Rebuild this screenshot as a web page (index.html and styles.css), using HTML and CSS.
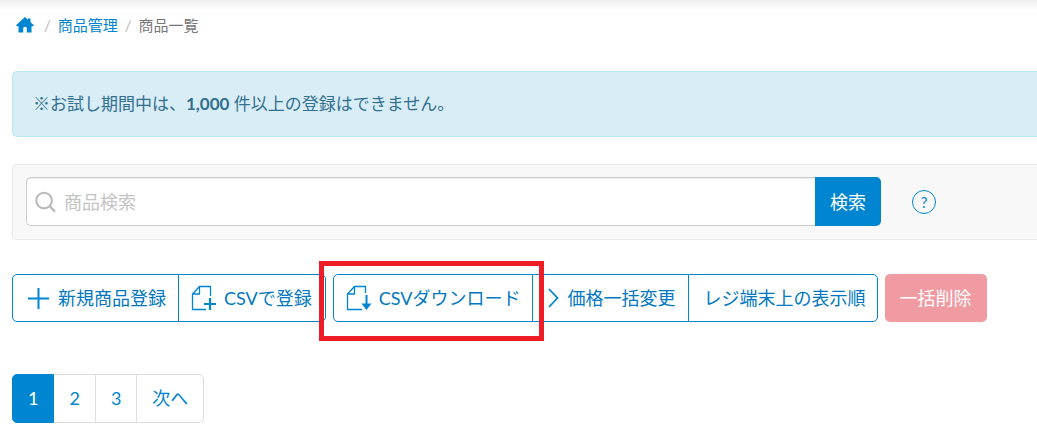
FILE: index.html
```html
<!DOCTYPE html>
<html lang="ja">
<head>
<meta charset="utf-8">
<title>商品一覧</title>
<link rel="stylesheet" href="styles.css">
</head>
<body>
<main class="page">
  <nav class="breadcrumb" aria-label="パンくず">
    <a href="#" class="home" aria-label="ホーム">
      <svg width="18" height="16" viewBox="0 0 18 16"><path fill="currentColor" d="M9 0 12 2.700V1.500h2.500v3.700L18 8.300 16.800 9.300H15.500V15.500H10.800V11.500a1.800 1.800 0 0 0-3.600 0v4H2.500V9.300H1.200L0 8.300Z"/></svg>
    </a>
    <span class="slash">/</span>
    <a href="#">商品管理</a>
    <span class="slash">/</span>
    <span class="current">商品一覧</span>
  </nav>

  <p class="notice">※お試し期間中は、<strong>1,000</strong> 件以上の登録はできません。</p>

  <form class="search">
    <div class="field">
      <svg width="21" height="22" viewBox="0 0 22 22" fill="none" stroke="#bbb" stroke-width="2.200"><circle cx="9.500" cy="9.500" r="8.200"/><path d="m15.300 15.300 5.700 5.700" stroke-width="2.500"/></svg>
      <input class="input" type="text" placeholder="商品検索" aria-label="商品検索">
    </div>
    <button class="submit" type="button">検索</button>
    <button class="help" type="button" aria-label="ヘルプ">?</button>
  </form>

  <div class="toolbar">
    <div class="group">
      <button class="btn btn-wide" type="button">
        <svg width="21" height="21" viewBox="0 0 21 21" fill="none" stroke="currentColor" stroke-width="2"><path d="M10.500 0v21M0 10.500h21"/></svg>
        新規商品登録
      </button>
      <button class="btn" type="button">
        <svg width="26" height="26" viewBox="0 0 26 26" fill="none" stroke="currentColor" stroke-width="1.300"><path d="M19.500 11V1.500H8.500L1.500 9v15.500H15M8.500 1.500V9h-7"/><path stroke-width="2.200" d="M19 13v12M13 19h12"/></svg>
        CSVで登録
      </button>
    </div>
    <div class="group">
      <div class="marked">
        <button class="btn" type="button">
          <svg width="26" height="26" viewBox="0 0 26 26" fill="none" stroke="currentColor" stroke-width="1.300"><path d="M19.500 8V1.500H8.500L1.500 9v15.500H16M8.500 1.500V9h-7"/><path stroke-width="2" d="M20.500 10v10"/><path fill="currentColor" stroke="none" d="M15.500 18.500h10l-5 6.500Z"/></svg>
          CSVダウンロード
        </button>
      </div>
      <button class="btn btn-wide" type="button">
        <svg width="11" height="20" viewBox="0 0 11 20" fill="none" stroke="currentColor" stroke-width="1.800"><path d="m1 1 8.500 9L1 19"/></svg>
        価格一括変更
      </button>
      <button class="btn btn-text" type="button">レジ端末上の表示順</button>
    </div>
    <button class="btn-danger" type="button" disabled>一括削除</button>
  </div>

  <nav class="pager" aria-label="ページ">
    <a href="#" class="active" aria-current="page">1</a>
    <a href="#">2</a>
    <a href="#">3</a>
    <a href="#">次へ</a>
  </nav>
</main>
</body>
</html>
```

FILE: styles.css
```css
* {
  box-sizing: border-box;
}

body {
  margin: 0;
  background: linear-gradient(#f0f0f0, #fff 10px) no-repeat #fff;
  color: #777;
  font: 400 18px/26px Lato, "Noto Sans CJK JP", sans-serif;
}

button,
input {
  font: inherit;
}

a {
  color: #0085d0;
  text-decoration: none;
}

svg {
  display: block;
  flex: none;
}

.page {
  padding: 13px 0 18px 12px;
  overflow: hidden;
}

.breadcrumb {
  display: flex;
  align-items: center;
  gap: 7px;
  padding-left: 4px;
  font-size: 15px;
  line-height: 24px;
}

.home {
  margin-right: 3px;
}

.slash {
  color: #bbb;
}

.notice {
  margin: 34px 0 27px;
  padding: 19px 20px;
  border: 1px solid #bce8f1;
  border-right: 0;
  border-radius: 5px 0 0 5px;
  background: #d9edf7;
  color: #31708f;
  font-size: 17px;
}

.notice strong {
  font-weight: 700;
}

.search {
  display: flex;
  align-items: center;
  padding: 12px 101px 13px 13px;
  border: 1px solid #e7e7e7;
  border-right: 0;
  border-radius: 5px 0 0 5px;
  background: #f8f8f8;
}

.field {
  display: flex;
  flex: 1;
  align-items: center;
  gap: 8px;
  height: 49px;
  padding-left: 8px;
  border: 1px solid #ccc;
  border-right: 0;
  border-radius: 5px 0 0 5px;
  background: #fff;
  box-shadow: inset 0 1px 1px rgba(0, 0, 0, 0.08);
}

.input {
  flex: 1;
  min-width: 0;
  padding: 0;
  border: 0;
  outline: 0;
  background: transparent;
  color: #555;
}

.input::placeholder {
  color: #c4c4c4;
  opacity: 1;
}

.submit {
  height: 49px;
  padding: 0 15px;
  border: 0;
  border-radius: 0 5px 5px 0;
  background: #0085d0;
  color: #fff;
}

.help {
  width: 24px;
  height: 24px;
  margin-left: 31px;
  padding: 0;
  border: 1px solid #0085d0;
  border-radius: 50%;
  background: transparent;
  color: #0085d0;
  font-size: 15px;
  line-height: 20px;
}

.toolbar {
  display: flex;
  gap: 7px;
  margin-top: 34px;
  white-space: nowrap;
}

.group {
  display: flex;
}

.group > * + * {
  margin-left: -1px;
}

.btn {
  display: flex;
  align-items: center;
  gap: 7px;
  height: 48px;
  padding: 0 13px 0 12px;
  border: 1px solid #0085d0;
  background: #fff;
  color: #0078c0;
}

.btn svg {
  color: #0085d0;
}

.btn-wide {
  gap: 9px;
  padding: 0 12px 0 15px;
}

.btn-text {
  padding: 0 11px 0 15px;
}

.group > :first-child,
.marked .btn {
  border-radius: 5px 0 0 5px;
}

.group > :last-child {
  border-radius: 0 5px 5px 0;
}

.marked {
  position: relative;
  z-index: 1;
}

.marked .btn {
  padding-right: 11px;
}

.marked::after {
  position: absolute;
  inset: -13px -11px -19px -14px;
  border: 5px solid #ee1c25;
  content: "";
  pointer-events: none;
}

.btn-danger {
  height: 48px;
  padding: 0 15px;
  border: 0;
  border-radius: 5px;
  background: #f09aa2;
  color: #fff;
}

.pager {
  display: flex;
  width: fit-content;
  margin-top: 52px;
}

.pager a {
  padding: 10px 15px 11px;
  border: 1px solid #ddd;
  border-left: 0;
}

.pager .active {
  border-color: #0085d0;
  border-left: 1px solid #0085d0;
  border-radius: 5px 0 0 5px;
  background: #0085d0;
  color: #fff;
}

.pager a:last-child {
  border-radius: 0 5px 5px 0;
}
```
